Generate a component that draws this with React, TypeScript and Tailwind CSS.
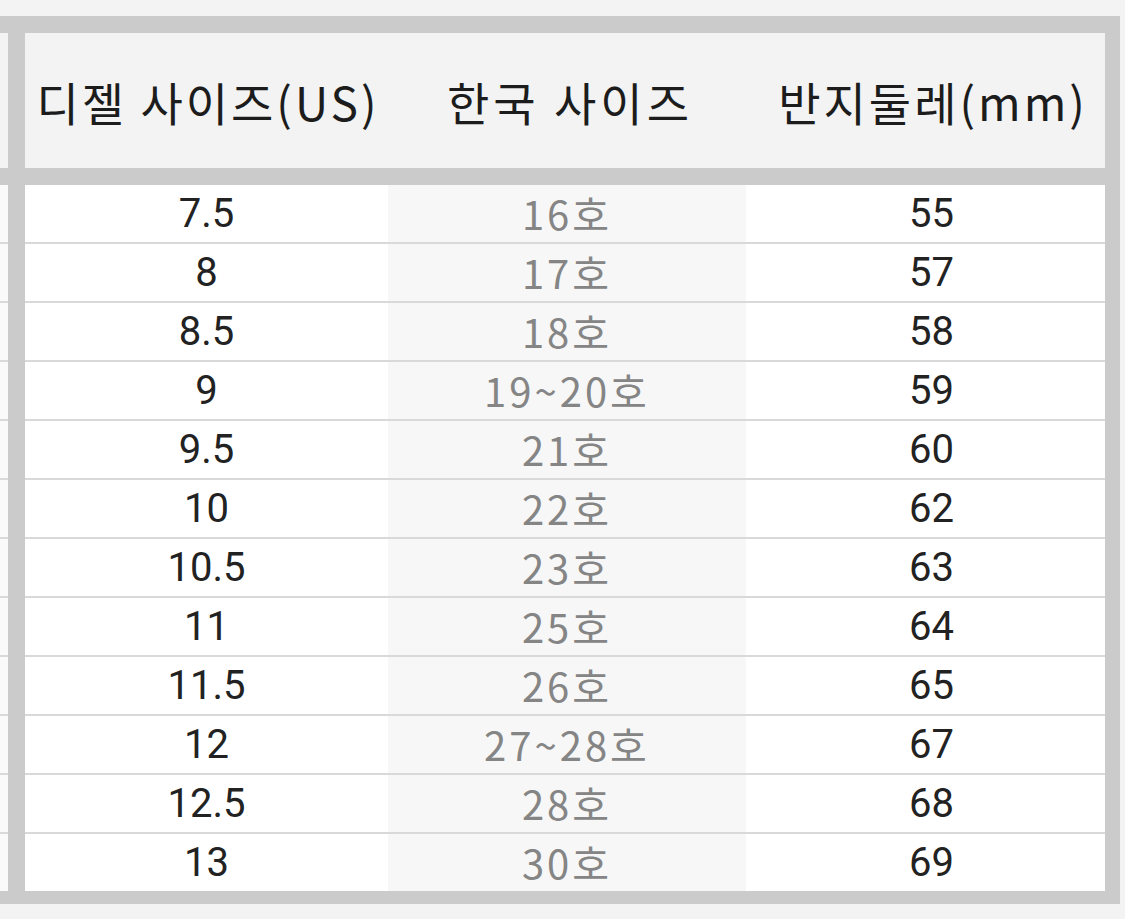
import React from 'react';

interface SizeRow {
  us: string;
  kr: string;
  mm: string;
}

const rows: SizeRow[] = [
  { us: '7.5', kr: '16호', mm: '55' },
  { us: '8', kr: '17호', mm: '57' },
  { us: '8.5', kr: '18호', mm: '58' },
  { us: '9', kr: '19~20호', mm: '59' },
  { us: '9.5', kr: '21호', mm: '60' },
  { us: '10', kr: '22호', mm: '62' },
  { us: '10.5', kr: '23호', mm: '63' },
  { us: '11', kr: '25호', mm: '64' },
  { us: '11.5', kr: '26호', mm: '65' },
  { us: '12', kr: '27~28호', mm: '67' },
  { us: '12.5', kr: '28호', mm: '68' },
  { us: '13', kr: '30호', mm: '69' },
];

const headFont = { fontFamily: '"Noto Sans CJK KR", "Noto Sans", sans-serif' };
const numFont = { fontFamily: 'Roboto, "Noto Sans CJK KR", sans-serif' };

export default function App() {
  return (
    <div className="min-h-[919px] w-[1125px] bg-[#f3f3f3] pt-[16px]">
      <div className="w-[1120px] border-t-[17px] border-r-[15px] border-b-[13px] border-[#cbcbcb]">
        {/* header */}
        <div className="flex h-[135px]">
          <div className="w-[8px] bg-[#f3f3f3]" />
          <div className="w-[17px] bg-[#cbcbcb]" />
          <div
            className="flex w-[363px] items-center justify-center bg-[#f3f3f3] pt-[2px] pl-[3px] text-[46px] tracking-[3px] text-[#1c1c1c]"
            style={headFont}
          >
            디젤 사이즈(US)
          </div>
          <div
            className="flex w-[358px] items-center justify-center bg-[#f3f3f3] pt-[2px] pl-[6px] text-[46px] tracking-[4px] text-[#1c1c1c]"
            style={headFont}
          >
            한국 사이즈
          </div>
          <div
            className="flex w-[359px] items-center justify-center bg-[#f3f3f3] pt-[2px] pl-[15px] text-[46px] tracking-[3px] text-[#1c1c1c]"
            style={headFont}
          >
            반지둘레(mm)
          </div>
        </div>
        <div className="h-[17px] bg-[#cbcbcb]" />

        {rows.map((r, i) => {
          const last = i === rows.length - 1;
          const cell = last ? 'h-[57px]' : 'h-[59px] border-b-2 border-[#d9d9d9]';
          return (
            <div key={r.us} className="flex">
              <div className={`w-[8px] bg-[#fafafa] ${cell}`} />
              <div className={`w-[17px] bg-[#cbcbcb] ${last ? 'h-[57px]' : 'h-[59px]'}`} />
              <div
                className={`flex w-[363px] items-center justify-center bg-white text-[40px] text-[#222] ${cell}`}
                style={numFont}
              >
                {r.us}
              </div>
              <div
                className={`flex w-[358px] items-center justify-center bg-[#f7f7f7] pb-[2px] text-[40px] tracking-[3px] text-[#858585] ${cell}`}
                style={headFont}
              >
                {r.kr}
              </div>
              <div
                className={`flex w-[359px] items-center justify-center bg-white pl-[12px] text-[40px] text-[#222] ${cell}`}
                style={numFont}
              >
                {r.mm}
              </div>
            </div>
          );
        })}
      </div>
    </div>
  );
}
